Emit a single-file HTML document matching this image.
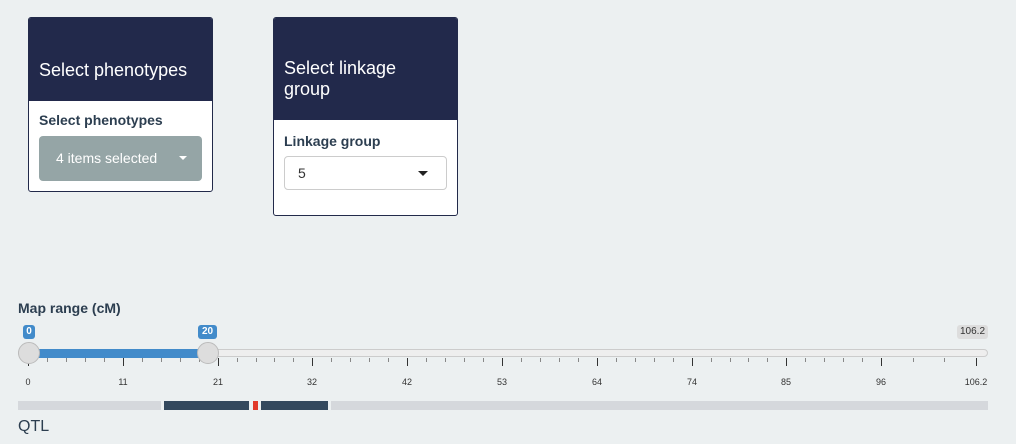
<!DOCTYPE html>
<html><head><style>
body{margin:0;width:1016px;height:444px;background:#ecf0f1;font-family:"Liberation Sans",sans-serif;position:relative;overflow:hidden}
.box{position:absolute;background:#fff;border:1px solid #222a4a;border-radius:3px;overflow:hidden}
.hd{background:#22294b;color:#fff;font-size:18px;line-height:22px}
.lbl{color:#2c3e50;font-size:14px;font-weight:bold;position:absolute}
.a{position:absolute}
.tk{position:absolute;width:1px;background:#333}
.tl{position:absolute;font-size:9px;color:#333;width:40px;text-align:center;top:377px}
.h{position:absolute;width:20px;height:20px;border-radius:50%;background:#ddd;border:1px solid #bbb;top:342px}
.v{position:absolute;background:#428bca;color:#fff;font-size:10px;font-weight:bold;border-radius:3px;top:325px;height:14px;line-height:14px;text-align:center}
</style></head><body>
<div class="box" style="left:28px;top:17px;width:183px;height:173px">
 <div class="hd" style="height:42px;padding:41px 0 0 10px">Select phenotypes</div>
 <div class="lbl" style="left:10px;top:94px">Select phenotypes</div>
 <div class="a" style="left:10px;top:118px;width:163px;height:45px;background:#95a5a6;border-radius:4px;color:#fff;font-size:14px;line-height:45px">
  <span style="position:absolute;left:17px">4 items selected</span>
  <span style="position:absolute;left:140px;top:20px;border:4px solid transparent;border-top:4px solid #fff;border-bottom:0"></span>
 </div>
</div>
<div class="box" style="left:273px;top:17px;width:183px;height:197px">
 <div class="hd" style="height:62px;padding:40px 0 0 10px;line-height:21px">Select linkage<br>group</div>
 <div class="lbl" style="left:10px;top:115px">Linkage group</div>
 <div class="a" style="left:10px;top:138px;width:161px;height:32px;border:1px solid #ccc;border-radius:4px;color:#333;font-size:14px;line-height:32px">
  <span style="position:absolute;left:13px">5</span>
  <span style="position:absolute;left:133px;top:14px;border:5px solid transparent;border-top:5px solid #222;border-bottom:0"></span>
 </div>
</div>
<div class="a" style="left:18px;top:300px;font-size:14px;font-weight:bold;color:#2c3e50">Map range (cM)</div>
<div class="a" style="left:18px;top:349px;width:970px;height:8px;background:#eee;border:1px solid #ccc;border-radius:5px;box-sizing:border-box"></div>
<div class="a" style="left:29px;top:349px;width:179px;height:9px;background:#428bca"></div>
<div class="v" style="left:23px;width:12px">0</div>
<div class="v" style="left:198px;width:19px">20</div>
<div class="a" style="left:957px;top:325px;width:31px;height:14px;background:#ddd;border-radius:3px;font-size:10px;line-height:14px;text-align:center;color:#333">106.2</div>
<div id="t"></div>
<div class="h" style="left:18px"></div>
<div class="h" style="left:197px"></div>
<div class="a" style="left:18px;top:401px;width:143px;height:9px;background:#d5d8dc"></div>
<div class="a" style="left:164px;top:401px;width:85px;height:9px;background:#34495e"></div>
<div class="a" style="left:253px;top:401px;width:5px;height:9px;background:#e13a2a"></div>
<div class="a" style="left:261px;top:401px;width:67px;height:9px;background:#34495e"></div>
<div class="a" style="left:331px;top:401px;width:657px;height:9px;background:#d5d8dc"></div>
<div class="a" style="left:18px;top:418px;font-size:16px;color:#2c3e50">QTL</div>
<script>
var t=document.getElementById('t'),h='',L=['0','11','21','32','42','53','64','74','85','96','106.2'];
for(var i=0;i<11;i++){var x=28+i*94.8;h+='<div class="tk" style="left:'+Math.round(x)+'px;top:358px;height:8px"></div><div class="tl" style="left:'+Math.round(x-20)+'px">'+L[i]+'</div>';
if(i<9){for(var j=1;j<5;j++)h+='<div class="tk" style="left:'+Math.round(x+j*18.96)+'px;top:358px;height:4px;background:#888"></div>';}
else if(i==9){for(var j=1;j<3;j++)h+='<div class="tk" style="left:'+Math.round(x+j*31.6)+'px;top:358px;height:4px;background:#888"></div>';}}
t.innerHTML=h;
</script>
</body></html>
